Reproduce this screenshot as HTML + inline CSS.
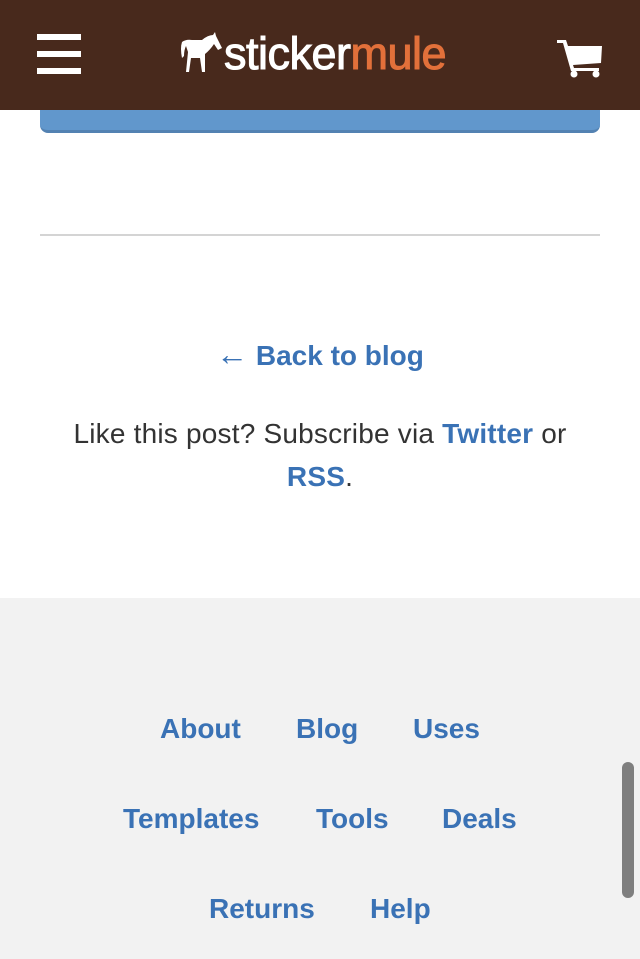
<!DOCTYPE html>
<html><head><style>
body{margin:0;width:640px;height:959px;overflow:hidden;background:#fff;font-family:"Liberation Sans",sans-serif;position:relative}
.hdr{position:absolute;left:0;top:0;width:640px;height:110px;background:#48291c}
.bar{position:absolute;left:37px;width:44px;height:6px;background:#fff}
.logo{position:absolute;left:224px;top:29px;font-size:45px;font-weight:normal;letter-spacing:-0.5px;color:#fff;line-height:50px;-webkit-text-stroke:1px #fff}
.logo span{color:#e2703a;-webkit-text-stroke:1px #e2703a}
.btn{position:absolute;left:40px;top:100px;width:560px;height:30px;background:#6197cc;border-bottom:3px solid #5382b2;border-radius:0 0 8px 8px}
.hr{position:absolute;left:40px;top:234px;width:560px;height:2px;background:#d4d4d4}
a{color:#3a72b5;font-weight:bold;text-decoration:none}
.c{position:absolute;left:0;width:640px;text-align:center;font-size:28px;color:#333}
.foot{position:absolute;left:0;top:598px;width:640px;height:361px;background:#f2f2f2}
.fl{position:absolute;font-size:28px}
.sb{position:absolute;left:622px;top:762px;width:12px;height:136px;border-radius:6px;background:#7f7f7f}
</style></head><body>
<div class="btn"></div>
<div class="hdr">
<div class="bar" style="top:34px"></div><div class="bar" style="top:51px"></div><div class="bar" style="top:68px"></div>
<svg style="position:absolute;left:180px;top:32px" width="44" height="42" viewBox="0 0 44 42"><path fill="#fff" d="M2 10 Q0 16 2 26 L4 24 Q4 18 6 14 L8 20 L6 40 L9 40 L11 26 L20 26 L22 40 L25 40 L25 22 Q30 18 34 12 L38 18 L42 16 L36 4 L35 0 L33 3 Q28 3 22 8 L12 8 Q6 7 2 10Z"/></svg>
<div class="logo">sticker<span>mule</span></div>
<svg style="position:absolute;left:557px;top:40px" width="46" height="38" viewBox="0 0 46 38"><path fill="#fff" d="M0 0 H9 L11 6 H45 L44 23 L16 25 L17 28 H42 V31 H14 L6 3 H0Z"/><circle cx="17" cy="34" r="3.5" fill="#fff"/><circle cx="39" cy="34" r="3.5" fill="#fff"/></svg>
</div>
<div class="hr"></div>
<div class="c" style="top:340px"><a href="#"><span style="font-weight:normal;font-size:32px;line-height:28px">←</span> Back to blog</a></div>
<div class="c" style="top:412px;line-height:43px;letter-spacing:0.2px">Like this post? Subscribe via <a href="#">Twitter</a> or<br><a href="#">RSS</a>.</div>
<div class="foot">
<a class="fl" style="left:160px;top:115px">About</a>
<a class="fl" style="left:296px;top:115px">Blog</a>
<a class="fl" style="left:413px;top:115px">Uses</a>
<a class="fl" style="left:123px;top:205px">Templates</a>
<a class="fl" style="left:316px;top:205px">Tools</a>
<a class="fl" style="left:442px;top:205px">Deals</a>
<a class="fl" style="left:209px;top:295px">Returns</a>
<a class="fl" style="left:370px;top:295px">Help</a>
</div>
<div class="sb"></div>
</body></html>
